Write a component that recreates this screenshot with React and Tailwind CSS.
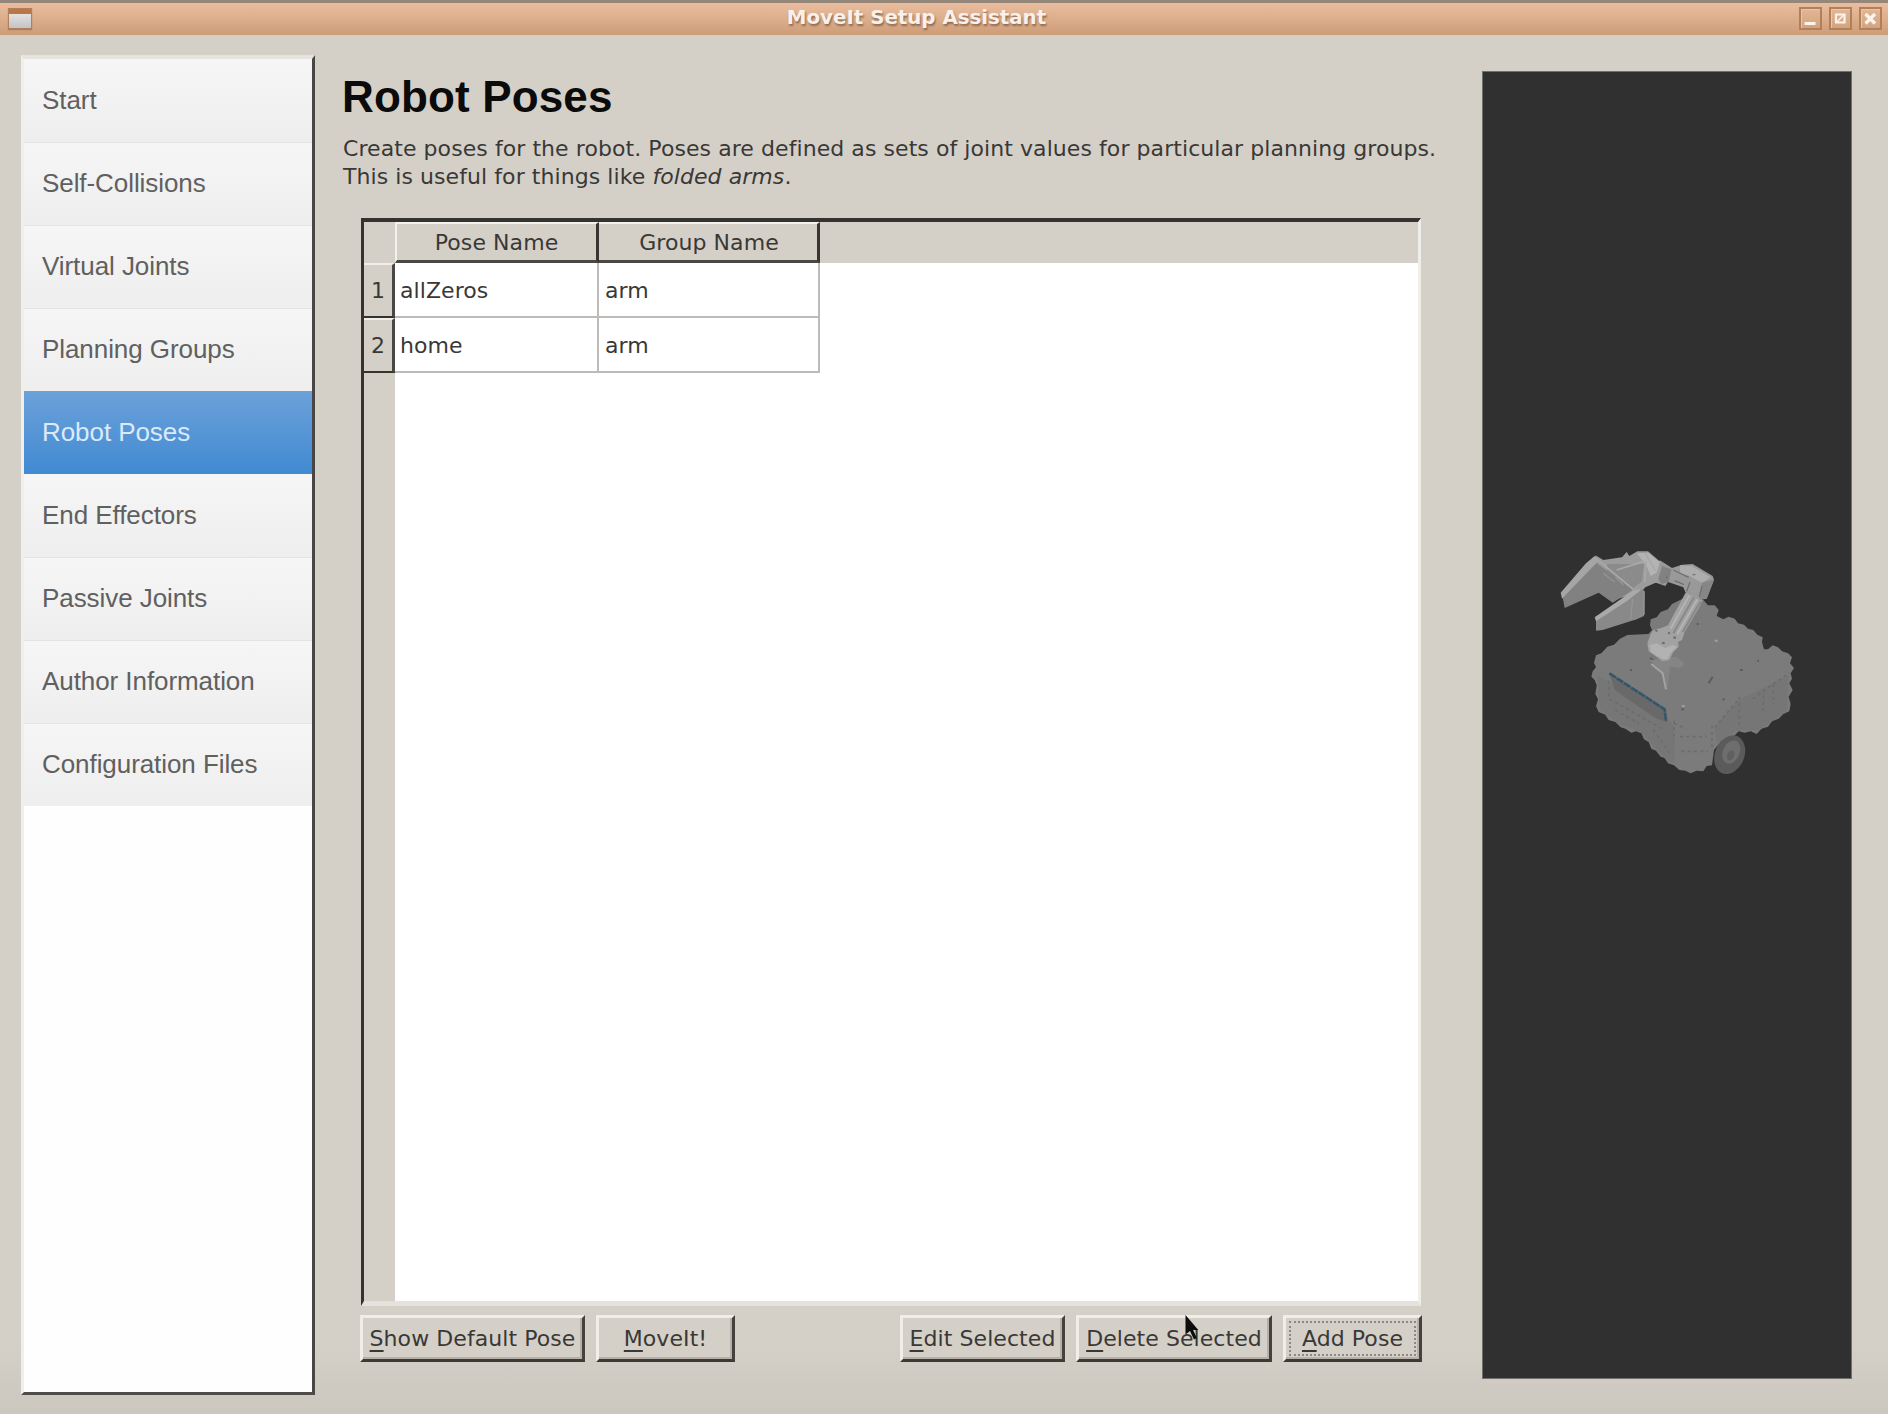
import React from 'react';

const NAV = [
  'Start',
  'Self-Collisions',
  'Virtual Joints',
  'Planning Groups',
  'Robot Poses',
  'End Effectors',
  'Passive Joints',
  'Author Information',
  'Configuration Files',
];

const POSES = [
  { name: 'allZeros', group: 'arm' },
  { name: 'home', group: 'arm' },
];

function TitleButton({ children }) {
  return (
    <span className="flex h-[23px] w-[23px] items-center justify-center border-2 border-[#b27f5b] bg-linear-to-b from-[#e2b797] to-[#d3a37d] shadow-[inset_1px_1px_0_#ecc6a8]">
      <svg width="17" height="17" viewBox="0 0 17 17" fill="none" stroke="#fbf3ec">
        {children}
      </svg>
    </span>
  );
}

function TitleBar() {
  return (
    <header className="flex h-[35px] items-center border-t-[3px] border-[#95877a] bg-linear-to-b from-[#eabd9f] via-[#dcae8b] to-[#cd9c78] pr-[6px] pb-[2px] pl-[8px]">
      <div className="h-[21px] w-[24px] border border-[#b07f5c] bg-linear-to-b from-[#ececec] to-[#c4c4c4] shadow-[0_1px_1px_#a87c5c]">
        <div className="h-[5px] bg-[#bd7546]" />
      </div>
      <h1 className="flex-1 pl-[2px] text-center text-[19.8px] leading-[30px] font-bold tracking-normal text-[#f8f0ea] [text-shadow:1px_2px_2px_#8f6a50]">
        MoveIt Setup Assistant
      </h1>
      <div className="flex gap-[7px]">
        <TitleButton>
          <path d="M2.500 13.500h11" strokeWidth="3" />
        </TitleButton>
        <TitleButton>
          <path d="M4 4.500h8.500v8H4z" strokeWidth="2.200" />
          <path d="M5 12l7-7.500" strokeWidth="1.500" />
        </TitleButton>
        <TitleButton>
          <path d="M3.500 4l9.500 9.500M13 4l-9.500 9.500" strokeWidth="3.400" />
        </TitleButton>
      </div>
    </header>
  );
}

function NavItem({ label, index, selected }) {
  if (selected) {
    return (
      <a className="flex h-[83px] items-center bg-linear-to-b from-[#6ba1d9] to-[#418ad2] pb-px pl-[18px] text-[#dbeafa]">
        {label}
      </a>
    );
  }
  const divided = index !== 0 && NAV[index - 1] !== 'Robot Poses';
  return (
    <a
      className={
        'flex h-[83px] items-center bg-linear-to-b from-[#f6f6f6] to-[#eeeeee] pb-px pl-[18px] text-[#606060] ' +
        (divided ? 'shadow-[inset_0_1px_0_#e3e3e3]' : '')
      }
    >
      {label}
    </a>
  );
}

function Sidebar() {
  return (
    <nav className="mt-[20px] ml-[21px] flex h-[1340px] w-[294px] flex-col border-t-4 border-r-[3px] border-b-[3px] border-l-[3px] border-t-[#e6e2dc] border-r-[#484744] border-b-[#4e4d4a] border-l-[#f1efec] bg-[#fefefe] font-['Liberation_Sans',sans-serif] text-[26px] tracking-[-0.07px]">
      {NAV.map((label, i) => (
        <NavItem key={label} label={label} index={i} selected={label === 'Robot Poses'} />
      ))}
    </nav>
  );
}

function HeaderCell({ className, children }) {
  return (
    <div
      className={
        'flex h-[41px] items-center justify-center border-t-2 border-r-[3px] border-b-[3px] border-t-[#f3f1ed] border-r-[#383532] border-b-[#4b4744] bg-[#d4d0c8] ' +
        className
      }
    >
      {children}
    </div>
  );
}

function PoseTable() {
  return (
    <section className="mt-[27px] ml-[18px] h-[1088px] w-[1060px] border-t-[4px] border-r-[3px] border-b-[5px] border-l-[3px] border-t-[#35322f] border-r-[#f0eee9] border-b-[#e4e2dc] border-l-[#35322f] bg-white">
      <div className="flex h-full">
        <div className="flex w-[31px] flex-col bg-[#d4d0c8] pt-[41px]">
          {POSES.map((pose, i) => (
            <div
              key={pose.name}
              className="flex h-[55px] items-center justify-center border-t-2 border-r-[3px] border-b-[2px] border-t-[#f0eee9] border-r-[#4b4744] border-b-[#35322f]"
            >
              {i + 1}
            </div>
          ))}
        </div>
        <div className="flex-1">
          <div className="flex h-[41px] bg-[#d4d0c8]">
            <HeaderCell className="w-[204px] border-l-2 border-l-[#f3f1ed]">Pose Name</HeaderCell>
            <HeaderCell className="w-[221px] pl-[2px]">Group Name</HeaderCell>
          </div>
          {POSES.map((pose) => (
            <div key={pose.name} className="flex h-[55px]">
              <div className="flex w-[204px] items-center border-r-2 border-b-2 border-[#bdbab8] pt-[2px] pl-[5px]">
                {pose.name}
              </div>
              <div className="flex w-[221px] items-center border-r-2 border-b-2 border-[#bdbab8] pt-[2px] pl-[6px]">
                {pose.group}
              </div>
            </div>
          ))}
        </div>
      </div>
    </section>
  );
}

function PushButton({ className = '', label, focused, children }) {
  return (
    <button
      className={
        'relative flex h-[47px] items-center justify-center border-[3px] border-t-[#f0eee9] border-r-[#45423e] border-b-[#3d3a36] border-l-[#f0eee9] bg-[#d4d0c8] pb-[1px] shadow-[inset_-2px_-2px_0_#b5b1aa] ' +
        className
      }
    >
      <span className="whitespace-nowrap">
        <span className="underline decoration-2 underline-offset-[4px] [text-decoration-skip-ink:none]">{label[0]}</span>
        {label.slice(1)}
      </span>
      {focused && <span className="absolute inset-[3px] border-2 border-dotted border-[#8b8781]" />}
      {children}
    </button>
  );
}

function Cursor() {
  return (
    <svg className="absolute top-[-4px] left-[105px]" width="18" height="28" viewBox="0 0 18 28">
      <path d="M1.500 1v19.500l4.500-3.500 4 8.500 2.800-1.400-3.700-8h5.200z" fill="#0c0c0c" />
    </svg>
  );
}

function Actions() {
  return (
    <div className="mt-[9px] ml-[17px] flex w-[1062px]">
      <PushButton className="w-[225px]" label="Show Default Pose" />
      <PushButton className="ml-[11px] w-[139px]" label="MoveIt!" />
      <PushButton className="ml-auto w-[165px]" label="Edit Selected" />
      <PushButton className="ml-[11px] w-[196px]" label="Delete Selected">
        <Cursor />
      </PushButton>
      <PushButton className="ml-[11px] w-[139px]" label="Add Pose" focused />
    </div>
  );
}

function Robot() {
  return (
    <svg width="280" height="260" viewBox="0 0 840 780">
      <g strokeLinejoin="round">
        {/* chassis */}
        <path
          fill="#7b7b7b"
          d="M168 376L184 370L202 350L222 344L240 326L262 315L325 312L336 300L330 286L332 268L350 262L362 246L384 238L396 222L440 200L490 210L504 226L524 226L536 240L530 258L550 268L566 260L584 266L594 280L612 284L624 296L640 300L652 314L668 322L666 336L672 358L684 358L698 346L714 352L726 364L744 370L756 382L750 400L762 414L752 430L756 446L748 460L758 480L746 500L752 522L748 544L730 552L716 566L696 574L684 590L664 596L650 612L632 604L614 608L596 604L580 620L545 632L522 660L516 706L500 708L490 724L470 722L452 730L436 722L418 720L402 706L384 700L374 684L362 680L348 662L334 656L326 636L312 628L304 610L288 604L274 608L256 596L242 592L226 576L206 570L196 554L176 546L168 528L174 508L166 492L170 466L164 450L154 440L158 424L168 412L162 398Z"
        />
        <path fill="#767676" d="M172 436L376 556L402 590L404 700L380 692L310 612L280 598L240 584L180 540Z" />
        <path fill="#767676" d="M524 592L596 510L746 436L742 540L660 600L590 602L530 640Z" />
        <path
          fill="none"
          stroke="#6c6c6c"
          strokeWidth="5"
          strokeDasharray="9 10"
          d="M206 452v54l160 90M402 572v60M402 580l36 16M516 586v70M524 592l72-84M598 500v90M638 506l110-78M420 620h80M424 664h80M672 478l-4 74M700 462v60M226 540l70 40M340 600l50 70"
        />
        <path fill="#696969" d="M210 436L376 540L380 576L346 564L224 480Z" />
        <path fill="none" stroke="#35566a" strokeWidth="8" d="M208 430l166 108 4 36" strokeDasharray="24 2" />
        <path
          fill="none"
          stroke="#5c5c5c"
          strokeWidth="6"
          d="M518 440l-12 20M470 282h6M548 508h6M600 420h8M330 384l14 8M652 392h5M424 538h8M270 420h6"
        />
        <path fill="none" stroke="#a0a0a0" strokeWidth="6" d="M524 332h9M426 528h8" />
        <path fill="#858585" d="M330 390L410 380L434 402L420 414L390 410L382 480L374 440Z" />
        <path fill="none" stroke="#a3a3a3" strokeWidth="6" d="M334 402l34 28 10 48" />
        {/* wheel */}
        <ellipse cx="569" cy="674" rx="44" ry="60" fill="#5b5b5b" transform="rotate(22 569 674)" />
        <ellipse cx="574" cy="666" rx="25" ry="36" fill="#6e6e6e" transform="rotate(22 574 666)" />
        <ellipse cx="572" cy="676" rx="10" ry="16" fill="#606060" transform="rotate(22 572 676)" />
        {/* lower arm and shoulder */}
        <path
          fill="#a2a2a2"
          d="M438 186L488 210L478 232L434 306L426 330L414 336L416 350L400 366L388 390L368 394L326 364L322 340L332 312L340 300L364 294L384 286Z"
        />
        <path fill="#b2b2b2" d="M330 346L350 340L376 354L398 344L410 352L394 366L382 388L366 386L332 366Z" />
        <path fill="none" stroke="#898989" strokeWidth="6" d="M462 202l-62 108M482 214l-54 92" />
        <path fill="none" stroke="#b6b6b6" strokeWidth="5" d="M448 196l-56 100M472 208l-60 104" />
        <path fill="none" stroke="#6c6c6c" strokeWidth="6" d="M346 300l6 4M384 308l6 3M366 338l8 2M400 322l8 2" />
        {/* elbow */}
        <path
          fill="#999999"
          d="M340 90L362 92L396 114L426 104L458 102L518 138L522 150L500 206L478 210L436 186L430 172L402 162L384 156L376 168L352 160L320 150Z"
        />
        <path fill="#adadad" d="M420 106L456 108L512 142L486 158L444 136L420 130Z" />
        <path fill="#868686" d="M486 158L522 148L500 206L478 208Z" />
        <path fill="#818181" d="M356 104L394 118L386 156L364 162L350 138Z" />
        <path
          fill="none"
          stroke="#707070"
          strokeWidth="4"
          d="M400 120l46 22M450 156l-10 28M404 152l28 12M458 134h8M378 142h6M486 168l-8 32"
        />
        {/* wrist */}
        <path
          fill="#9c9c9c"
          d="M166 76L190 90L246 82L260 66L268 78L292 64L324 64L352 88L366 110L352 156L316 172L304 186L220 210L170 160Z"
        />
        <path fill="#b3b3b3" d="M290 70L324 68L360 96L350 128L332 138L318 104Z" />
        <path fill="#8b8b8b" d="M202 102L312 102L306 154L276 178L200 136Z" />
        <path fill="none" stroke="#a9a9a9" strokeWidth="5" d="M176 92l104 86M318 92l-4 66M230 120l82-26M316 70l30 52" />
        {/* gripper fingers */}
        <path fill="#818181" d="M166 96L278 180L218 218L176 188L74 234L66 192Z" />
        <path fill="#a5a5a5" d="M164 78L178 90L66 206L62 188L138 100Z" />
        <path fill="#898989" d="M168 266L304 176L314 184L312 258L290 268L188 300L168 302Z" />
        <path fill="#aaaaaa" d="M164 262L282 180L306 178L262 212L168 274Z" />
        <path fill="none" stroke="#959595" strokeWidth="4" d="M278 206l-6 62M312 184v70M190 130l34 26M226 140l24 24" />
      </g>
    </svg>
  );
}

export default function App() {
  return (
    <div className="h-[1414px] w-[1888px] overflow-hidden bg-[#d4d0c8] font-['DejaVu_Sans',sans-serif] text-[22px] tracking-[0.07px] text-[#3a3836]">
      <TitleBar />
      <main className="flex h-[1379px] bg-linear-to-b from-[#d4d0c8] from-95% to-[#cbc6be]">
        <Sidebar />
        <div className="ml-[28px] w-[1139px] pt-[32px]">
          <h2 className="-ml-[1px] font-['Liberation_Sans',sans-serif] text-[44px] leading-[60px] font-bold tracking-[0.15px] text-[#0b0b0b]">
            Robot Poses
          </h2>
          <p className="mt-[8px] leading-[28px] whitespace-nowrap">
            Create poses for the robot. Poses are defined as sets of joint values for particular planning groups.
            <br />
            This is useful for things like <em>folded arms</em>.
          </p>
          <PoseTable />
          <Actions />
        </div>
        <aside className="mt-[36px] h-[1308px] w-[370px] border border-[#70706e] bg-[#303030] pt-[458px] pl-[57px]">
          <Robot />
        </aside>
      </main>
    </div>
  );
}
